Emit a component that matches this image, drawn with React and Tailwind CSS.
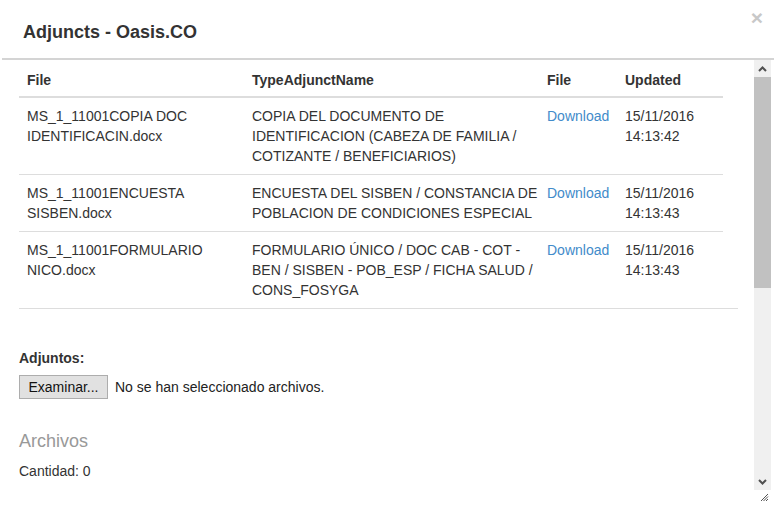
import React from 'react'

const rows = [
  {
    file: 'MS_1_11001COPIA DOC IDENTIFICACIN.docx',
    type: 'COPIA DEL DOCUMENTO DE IDENTIFICACION (CABEZA DE FAMILIA / COTIZANTE / BENEFICIARIOS)',
    updated: '15/11/2016 14:13:42',
  },
  {
    file: 'MS_1_11001ENCUESTA SISBEN.docx',
    type: 'ENCUESTA DEL SISBEN / CONSTANCIA DE POBLACION DE CONDICIONES ESPECIAL',
    updated: '15/11/2016 14:13:43',
  },
  {
    file: 'MS_1_11001FORMULARIO NICO.docx',
    type: 'FORMULARIO ÚNICO / DOC CAB - COT - BEN / SISBEN - POB_ESP / FICHA SALUD / CONS_FOSYGA',
    updated: '15/11/2016 14:13:43',
  },
]

const Chevron = ({ up }) => (
  <svg width="9" height="6" viewBox="0 0 9 6">
    <path
      d={up ? 'M1 5 L4.5 1.5 L8 5' : 'M1 1 L4.5 4.5 L8 1'}
      fill="none"
      stroke="#505050"
      strokeWidth="2"
    />
  </svg>
)

export default function App() {
  return (
    <div className="w-[774px] h-[507px] bg-white relative overflow-hidden font-['Liberation_Sans',Arial,sans-serif] text-[14px] text-[#333]">
      {/* modal header */}
      <div className="h-[58px] pl-[23px] pt-[22px]">
        <h4 className="text-[18px] font-bold leading-5 text-[#333]">Adjuncts - Oasis.CO</h4>
      </div>
      <button className="absolute top-[7px] right-[11px] text-[21px] font-bold leading-none text-[#c8c8c8]">×</button>

      <div className="ml-[2px] h-[2px] bg-[#d4d4d4]"></div>

      {/* body with scroll area */}
      <div className="flex h-[430px]">
        <div className="w-[754px] pl-[19px] overflow-hidden">
          <div className="grid grid-cols-[225px_295px_78px_106px] w-[704px] leading-5">
            <div className="px-2 pt-[10px] pb-[6px] font-bold border-b-2 border-[#ddd]">File</div>
            <div className="px-2 pt-[10px] pb-[6px] font-bold border-b-2 border-[#ddd]">TypeAdjunctName</div>
            <div className="px-2 pt-[10px] pb-[6px] font-bold border-b-2 border-[#ddd]">File</div>
            <div className="px-2 pt-[10px] pb-[6px] font-bold border-b-2 border-[#ddd]">Updated</div>
            {rows.map((r, i) => {
              const b = i < rows.length - 1 ? 'border-b border-[#ddd]' : ''
              return (
                <React.Fragment key={i}>
                  <div className={`px-2 py-2 ${b}`}>{r.file}</div>
                  <div className={`pl-2 py-2 ${b}`}>{r.type}</div>
                  <div className={`px-2 py-2 ${b}`}>
                    <a className="text-[#428bca] whitespace-nowrap">Download</a>
                  </div>
                  <div className={`px-2 py-2 ${b}`}>{r.updated}</div>
                </React.Fragment>
              )
            })}
          </div>
          <div className="w-[719px] border-b border-[#ddd]"></div>

          <div className="mt-[39px] font-bold leading-5">Adjuntos:</div>
          <div className="mt-[7px] flex items-center gap-[7px]">
            <button className="h-[24px] w-[89px] bg-[#e1e1e1] border border-[#adadad] leading-none text-[#111]">
              Examinar...
            </button>
            <span className="text-[#222]">No se han seleccionado archivos.</span>
          </div>

          <div className="mt-[32px] text-[18px] leading-5 text-[#999]">Archivos</div>
          <div className="mt-[10px] leading-5">Cantidad: 0</div>
        </div>

        {/* scrollbar */}
        <div className="w-[17px] flex flex-col bg-[#f0f0f0]">
          <div className="h-[17px] flex items-center justify-center">
            <Chevron up />
          </div>
          <div className="h-[211px] bg-[#c1c1c1]"></div>
          <div className="flex-1"></div>
          <div className="h-[17px] flex items-center justify-center">
            <Chevron />
          </div>
        </div>
      </div>

      {/* resize grip */}
      <div className="flex justify-end pr-[5px] pt-[3px]">
        <svg width="9" height="9" viewBox="0 0 9 9">
          <path d="M8 1 L1 8 M8 3.5 L3.5 8 M8 6 L6 8" stroke="#555" strokeWidth="1" />
        </svg>
      </div>
    </div>
  )
}
